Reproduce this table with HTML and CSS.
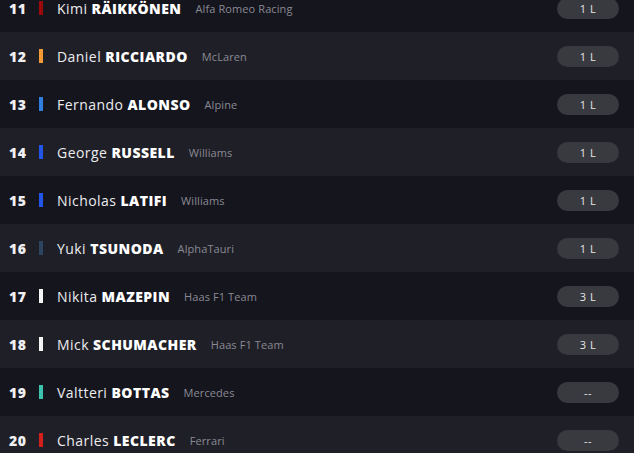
FILE: index.html
```html
<!DOCTYPE html>
<html lang="en">
<head>
<meta charset="utf-8">
<title>Standings</title>
<link rel="stylesheet" href="styles.css">
</head>
<body>
<div class="list">
  <div class="row odd"><span class="pos">11</span><span class="bar c-alfa"></span><span class="name">Kimi <b>RÄIKKÖNEN</b></span><span class="team">Alfa Romeo Racing</span><span class="pill">1 L</span></div>
  <div class="row even"><span class="pos">12</span><span class="bar c-mclaren"></span><span class="name">Daniel <b>RICCIARDO</b></span><span class="team">McLaren</span><span class="pill">1 L</span></div>
  <div class="row odd"><span class="pos">13</span><span class="bar c-alpine"></span><span class="name">Fernando <b>ALONSO</b></span><span class="team">Alpine</span><span class="pill">1 L</span></div>
  <div class="row even"><span class="pos">14</span><span class="bar c-williams"></span><span class="name">George <b>RUSSELL</b></span><span class="team">Williams</span><span class="pill">1 L</span></div>
  <div class="row odd"><span class="pos">15</span><span class="bar c-williams"></span><span class="name">Nicholas <b>LATIFI</b></span><span class="team">Williams</span><span class="pill">1 L</span></div>
  <div class="row even"><span class="pos">16</span><span class="bar c-alphatauri"></span><span class="name">Yuki <b>TSUNODA</b></span><span class="team">AlphaTauri</span><span class="pill">1 L</span></div>
  <div class="row odd"><span class="pos">17</span><span class="bar c-haas"></span><span class="name">Nikita <b>MAZEPIN</b></span><span class="team">Haas F1 Team</span><span class="pill">3 L</span></div>
  <div class="row even"><span class="pos">18</span><span class="bar c-haas"></span><span class="name">Mick <b>SCHUMACHER</b></span><span class="team">Haas F1 Team</span><span class="pill">3 L</span></div>
  <div class="row odd"><span class="pos">19</span><span class="bar c-mercedes"></span><span class="name">Valtteri <b>BOTTAS</b></span><span class="team">Mercedes</span><span class="pill">--</span></div>
  <div class="row even"><span class="pos">20</span><span class="bar c-ferrari"></span><span class="name">Charles <b>LECLERC</b></span><span class="team">Ferrari</span><span class="pill">--</span></div>
</div>
</body>
</html>
```
FILE: styles.css
```css
html, body {
  margin: 0;
  padding: 0;
  background: #15151e;
  overflow: hidden;
}
body {
  font-family: "Open Sans", "DejaVu Sans", sans-serif;
  color: #f0f0f2;
}
.list {
  margin-top: -16px;
  display: flex;
  flex-direction: column;
}
.row {
  height: 48px;
  display: flex;
  align-items: center;
  padding: 0 15px 0 9px;
  box-sizing: border-box;
}
.odd { background: #15151e; }
.even { background: #1f1f27; }
.pos {
  width: 30px;
  font-weight: 800;
  font-size: 14px;
  letter-spacing: 0.6px;
}
.bar {
  width: 4px;
  height: 14px;
  margin-right: 14px;
}
.c-alfa { background: #9b0a0a; }
.c-mclaren { background: #f59a34; }
.c-alpine { background: #2f7ee0; }
.c-williams { background: #2355e6; }
.c-alphatauri { background: #2c4460; }
.c-haas { background: #f5f5f5; }
.c-mercedes { background: #3cc3ad; }
.c-ferrari { background: #d41f1f; }
.name {
  font-size: 14px;
  letter-spacing: 0.45px;
  color: #ececef;
}
.name b {
  font-weight: 800;
  color: #ffffff;
}
.team {
  margin-left: 14px;
  font-size: 11px;
  letter-spacing: 0.1px;
  color: #8a8a93;
  flex: 1;
}
.pill {
  width: 62px;
  height: 21px;
  border-radius: 11px;
  background: #393940;
  color: #e6e6ea;
  font-size: 11px;
  display: flex;
  align-items: center;
  justify-content: center;
  letter-spacing: 0.5px;
}
```
